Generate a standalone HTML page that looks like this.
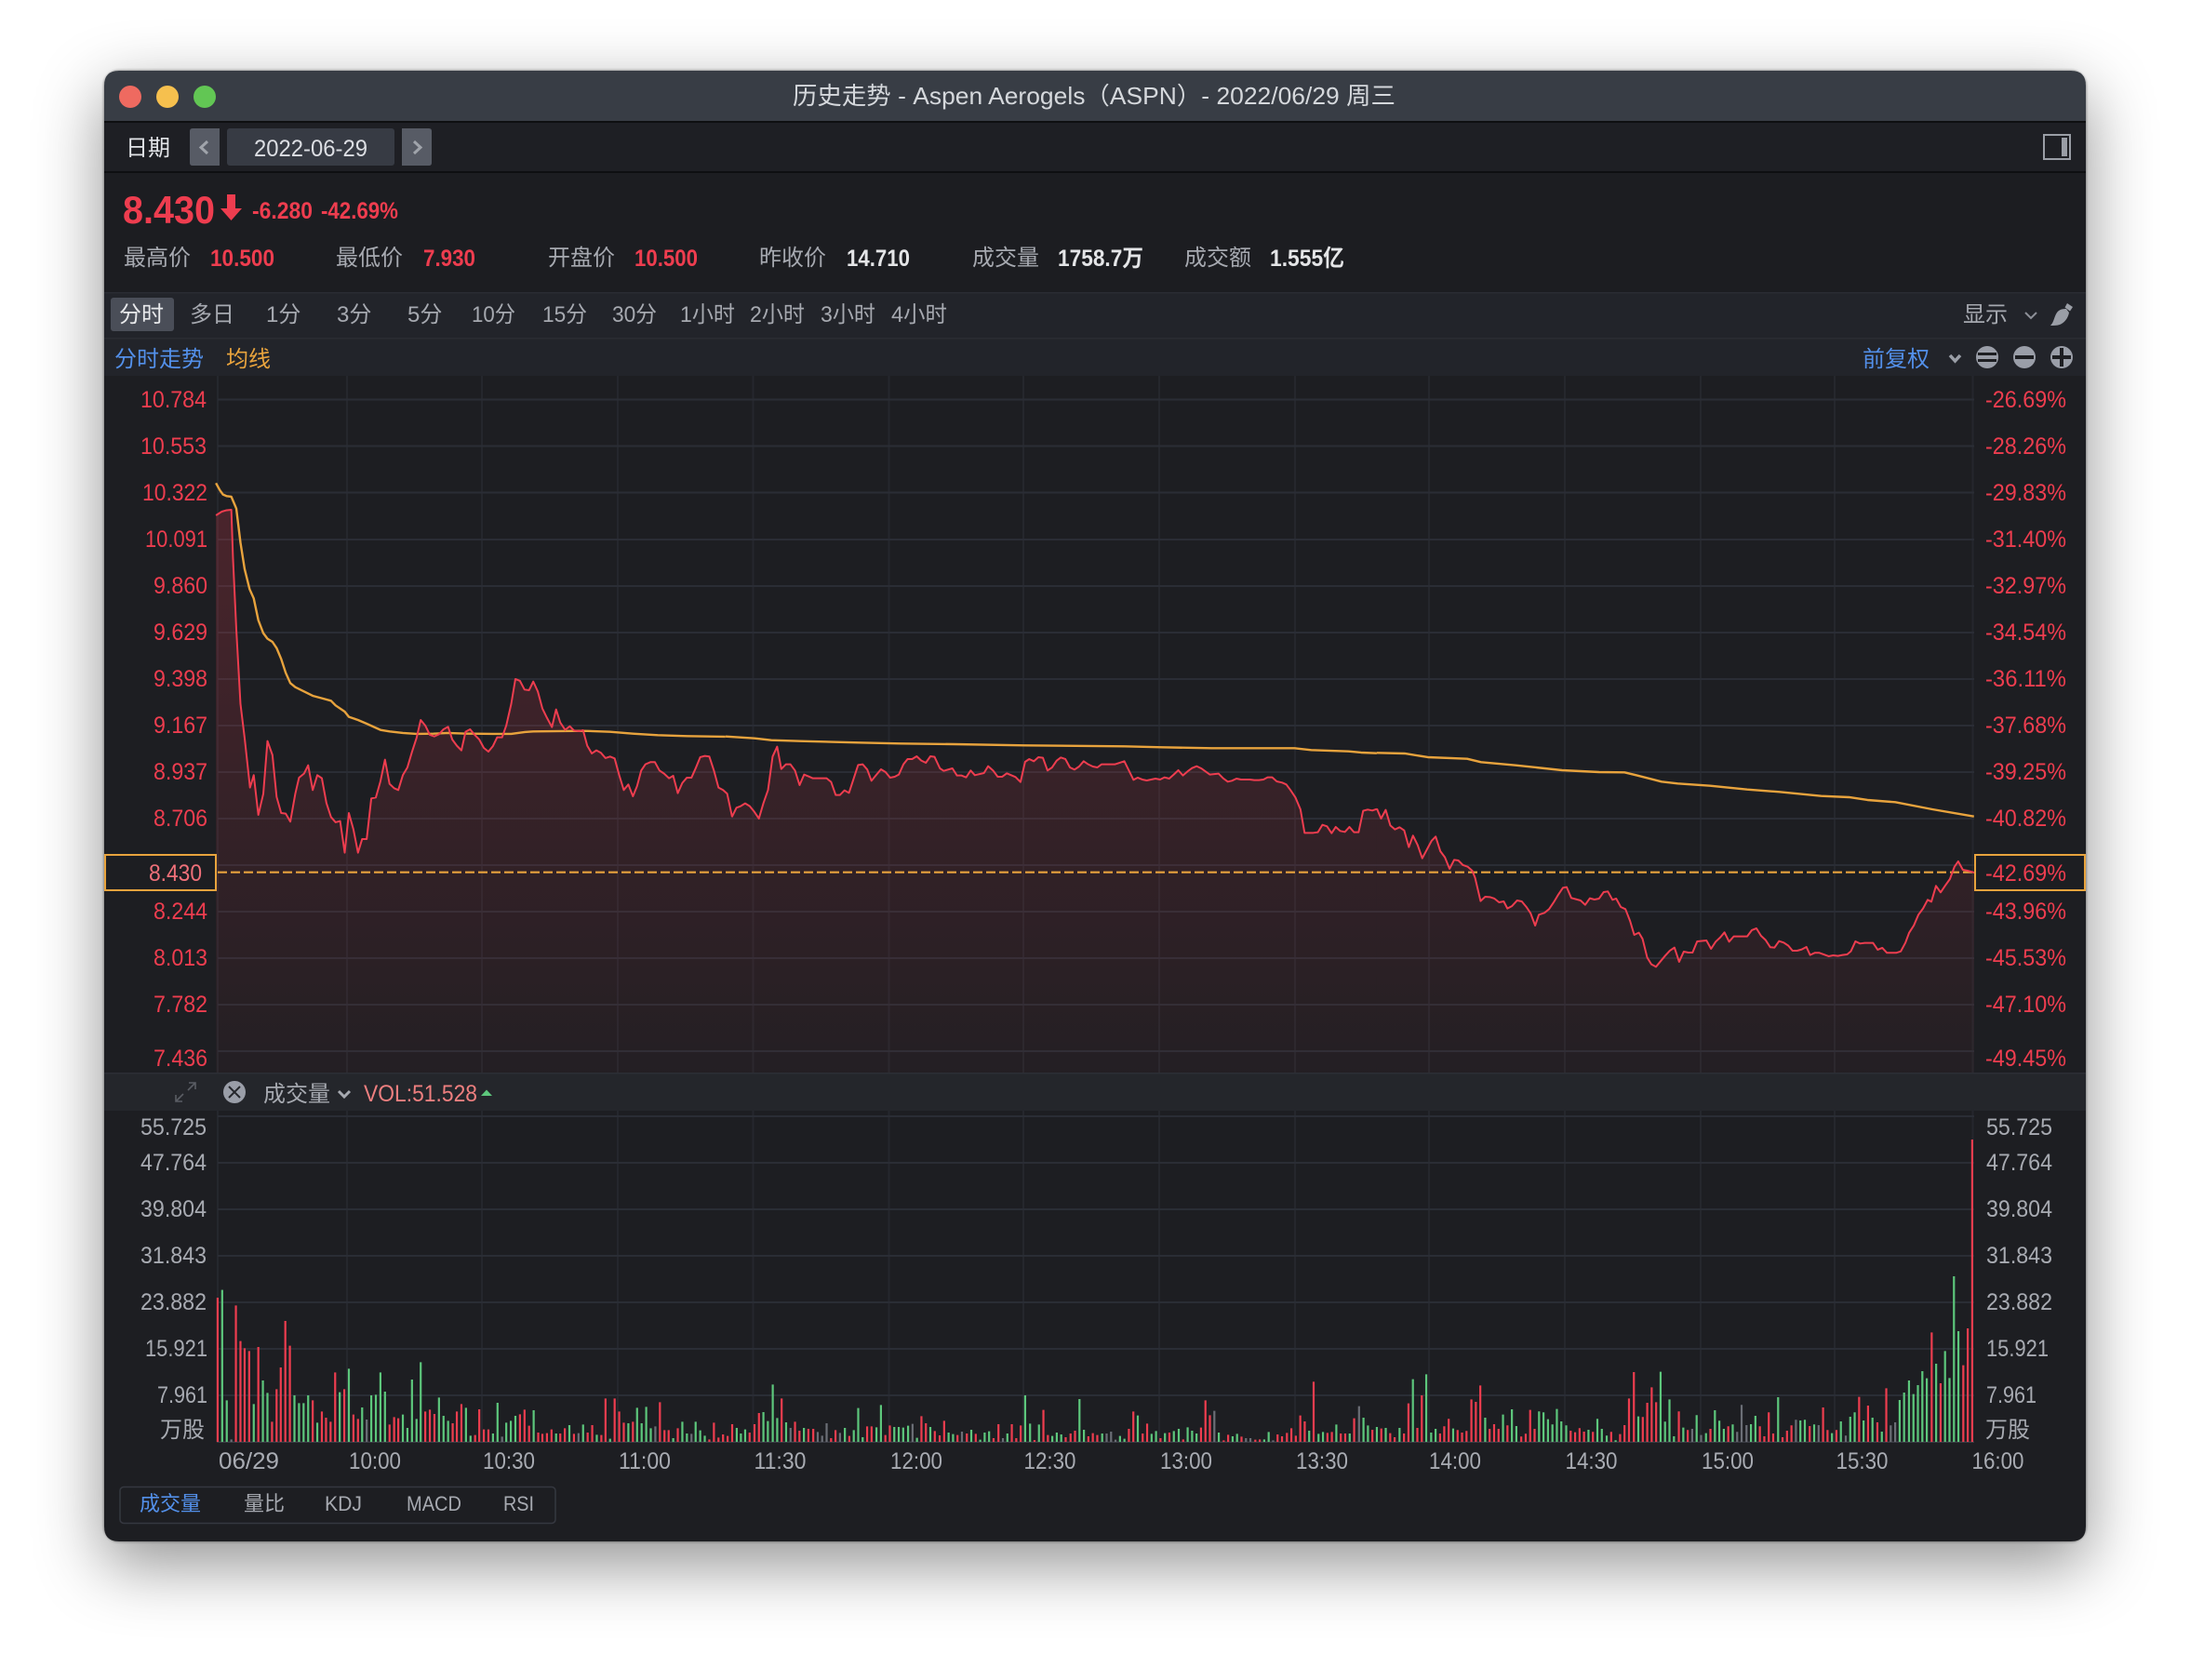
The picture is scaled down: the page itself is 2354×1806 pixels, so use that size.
<!DOCTYPE html>
<html lang="zh"><head><meta charset="utf-8"><title>历史走势</title>
<style>
html,body{margin:0;padding:0;width:2354px;height:1806px;overflow:hidden;background:#fff}
#win{position:absolute;left:112px;top:76px;width:2130px;height:1581px;border-radius:16px;box-shadow:0 24px 70px 2px rgba(0,0,0,.42),0 0 2px 1px rgba(0,0,0,.3)}
svg{position:absolute;left:0;top:0}
text{font-family:"Liberation Sans","Noto Sans CJK SC",sans-serif;font-size:25px;white-space:pre}
.c{font-size:24px;fill:#a6a9b0}
.r{fill:#ee3d4f}
.g{fill:#a8abb2}
.b{font-weight:700}
.bl{fill:#5390ea}
.nse{vector-effect:non-scaling-stroke;fill:none}
.ln{stroke:#2a2d35;stroke-width:2}
.vl{stroke:#25272d;stroke-width:2}
</style></head><body>
<div id="win"></div>
<svg width="2354" height="1806" viewBox="0 0 2354 1806" xmlns="http://www.w3.org/2000/svg">
<defs>
<linearGradient id="fg" gradientUnits="userSpaceOnUse" x1="0" y1="560" x2="0" y2="1153">
<stop offset="0" stop-color="#f03c50" stop-opacity=".21"/><stop offset="1" stop-color="#f03c50" stop-opacity=".03"/></linearGradient>
<clipPath id="ar">
<polygon transform="translate(100,500) scale(.4464,.3333)" points="296,162 310,150 320,146 333,144 337,300 345,530 355,770 365,880 378,1040 387,1000 398,1128 410,1060 420,890 432,935 442,1070 453,1122 464,1124 475,1150 487,1060 496,1008 508,995 518,968 529,1048 540,1000 551,1010 562,1090 573,1135 584,1152 595,1148 606,1250 616,1122 627,1175 638,1250 648,1206 659,1206 670,1075 681,1072 692,1020 703,950 714,1028 725,1042 735,1048 746,1000 757,975 768,925 779,880 789,822 800,840 811,870 822,875 833,868 844,852 855,844 865,885 876,905 887,920 897,860 908,852 919,870 930,885 941,912 952,924 963,906 973,878 985,878 995,840 1007,770 1017,690 1028,696 1039,724 1050,726 1060,698 1071,730 1082,785 1093,815 1105,845 1115,788 1125,830 1137,854 1148,842 1158,856 1170,858 1180,855 1190,905 1201,930 1212,920 1223,928 1234,945 1245,940 1256,946 1267,1000 1278,1048 1289,1030 1300,1068 1310,1035 1320,985 1330,965 1342,958 1353,958 1364,985 1375,995 1387,1010 1397,1002 1408,1058 1419,1025 1430,1008 1441,1008 1451,978 1462,942 1473,938 1484,940 1495,985 1506,1040 1517,1048 1527,1060 1539,1135 1539,1959 296,1959"/>
<polygon transform="translate(780,720) scale(.4464,.3333)" points="15,475 26,445 36,440 47,431 58,440 69,458 80,480 91,430 102,388 113,280 124,248 134,320 145,305 156,305 167,325 178,372 189,338 200,344 210,350 243,350 254,362 265,404 275,404 286,389 297,397 308,352 319,307 330,305 341,322 351,358 362,340 374,321 385,330 396,348 407,345 417,338 428,305 438,288 449,288 460,279 471,293 482,300 493,279 503,281 516,318 525,326 546,318 557,341 568,341 579,347 590,325 600,340 622,333 632,311 644,325 655,345 666,345 677,334 698,346 710,362 721,297 731,288 742,295 753,282 764,284 775,325 786,315 797,293 807,283 818,288 829,315 840,322 851,312 862,295 873,305 884,312 895,315 905,305 937,305 960,295 982,355 992,348 1003,354 1014,357 1035,351 1046,354 1057,347 1068,351 1079,338 1090,324 1101,341 1112,328 1123,317 1134,311 1145,318 1166,338 1187,335 1198,350 1209,361 1219,358 1230,351 1241,354 1262,354 1273,356 1284,356 1295,354 1305,347 1316,347 1327,360 1340,364 1350,370 1360,388 1372,412 1384,450 1394,526 1415,526 1426,524 1437,500 1448,505 1459,527 1469,507 1480,520 1491,523 1502,507 1513,524 1524,524 1535,455 1546,451 1557,454 1568,449 1568,1299 15,1299"/>
<polygon transform="translate(1480,780) scale(.4975,.3333)" points="0,268 9,300 19,272 29,322 39,335 49,328 59,338 69,392 78,355 88,385 98,428 108,400 118,372 127,358 137,405 147,425 157,462 167,433 176,435 186,450 196,455 206,468 212,490 224,566 234,552 244,553 254,558 264,570 274,567 282,590 292,582 303,564 313,567 323,585 332,605 342,645 350,610 362,604 372,592 382,570 392,545 402,523 410,521 420,556 430,560 440,564 450,578 460,557 470,561 480,558 490,537 499,535 509,562 517,558 527,585 537,592 547,630 556,675 566,668 574,688 584,748 593,770 603,778 613,760 623,742 633,726 643,716 653,762 663,729 673,732 682,732 692,696 712,693 722,720 732,697 742,683 751,667 761,697 771,680 800,680 810,660 820,654 830,678 840,692 850,715 859,716 869,695 879,700 889,710 898,726 908,726 918,722 928,714 936,740 946,733 956,733 976,744 986,741 996,743 1006,740 1016,738 1024,728 1034,696 1044,703 1054,701 1072,701 1082,723 1092,717 1102,733 1122,733 1132,728 1142,700 1150,668 1160,645 1170,610 1180,590 1190,562 1198,568 1208,517 1218,538 1228,516 1238,495 1248,455 1256,438 1266,465 1276,468 1286,472 1292,475 1292,1119 0,1119"/>
</clipPath>
</defs>

<!-- window -->
<path d="M112 130V92Q112 76 128 76H2226Q2242 76 2242 92V130Z" fill="#383d45"/>
<path d="M112 130H2242V1641Q2242 1657 2226 1657H128Q112 1657 112 1641Z" fill="#1d1e22"/>
<rect x="112" y="130" width="2130" height="2" fill="#0e0f11"/>
<rect x="112" y="132" width="2130" height="52" fill="#1e1f24"/>
<rect x="112" y="184" width="2130" height="2" fill="#0e0f11"/>
<rect x="112" y="186" width="2130" height="128" fill="#1c1d21"/>
<rect x="112" y="314" width="2130" height="90" fill="#22242a"/>
<rect x="112" y="314" width="2130" height="1.5" fill="#2a2c33"/>
<rect x="112" y="363" width="2130" height="1.5" fill="#2a2c33"/>

<circle cx="140" cy="104" r="12" fill="#ee6a60"/><circle cx="180" cy="104" r="12" fill="#f6c04e"/><circle cx="220" cy="104" r="12" fill="#62c654"/>
<text x="852" y="112" textLength="648" lengthAdjust="spacingAndGlyphs" fill="#d5d8dc" style="font-size:26px">历史走势 - Aspen Aerogels（ASPN）- 2022/06/29 周三</text>

<!-- toolbar -->
<text x="135" y="167" class="c" style="fill:#e2e4e8">日期</text>
<path d="M207 138H236V178H207Q204 178 204 175V141Q204 138 207 138Z" fill="#575b65"/>
<path d="M223 152l-7 6.500 7 6.500" fill="none" stroke="#a0a4ab" stroke-width="3"/>
<rect x="244" y="138" width="180" height="40" rx="3" fill="#373b44"/>
<text x="273" y="168" textLength="122" lengthAdjust="spacingAndGlyphs" fill="#dcdee3" style="font-size:25px">2022-06-29</text>
<path d="M432 138H461Q464 138 464 141V175Q464 178 461 178H432Z" fill="#575b65"/>
<path d="M445 152l7 6.500-7 6.500" fill="none" stroke="#a0a4ab" stroke-width="3"/>
<rect x="2197" y="145" width="28" height="26" fill="none" stroke="#9a9ea6" stroke-width="2"/>
<rect x="2216" y="148" width="6" height="20" fill="#9a9ea6"/>

<!-- stats -->
<text x="132" y="240" class="r b" textLength="99" lengthAdjust="spacingAndGlyphs" style="font-size:42px">8.430</text>
<path d="M244 209h9v15h7l-11.500 13-11.500-13h7z" fill="#ee3d4f"/>
<text x="271" y="235" class="r b" textLength="65" lengthAdjust="spacingAndGlyphs">-6.280</text>
<text x="345" y="235" class="r b" textLength="83" lengthAdjust="spacingAndGlyphs">-42.69%</text>
<text x="133" y="285" class="c">最高价</text><text x="226" y="286" class="r b" textLength="69" lengthAdjust="spacingAndGlyphs">10.500</text>
<text x="361" y="285" class="c">最低价</text><text x="455" y="286" class="r b" textLength="56" lengthAdjust="spacingAndGlyphs">7.930</text>
<text x="589" y="285" class="c">开盘价</text><text x="682" y="286" class="r b" textLength="68" lengthAdjust="spacingAndGlyphs">10.500</text>
<text x="816" y="285" class="c">昨收价</text><text x="910" y="286" class="b" fill="#e4e5e7" textLength="68" lengthAdjust="spacingAndGlyphs">14.710</text>
<text x="1045" y="285" class="c">成交量</text><text x="1137" y="286" class="b" fill="#e4e5e7" textLength="92" lengthAdjust="spacingAndGlyphs">1758.7万</text>
<text x="1273" y="285" class="c">成交额</text><text x="1365" y="286" class="b" fill="#e4e5e7" textLength="80" lengthAdjust="spacingAndGlyphs">1.555亿</text>

<!-- periods -->
<rect x="119" y="320" width="68" height="36" rx="3" fill="#4a4e58"/>
<text x="128" y="346" class="c" style="fill:#e8e9eb">分时</text>
<text x="204" y="346" class="c">多日</text>
<text x="286" y="346" class="c">1分</text>
<text x="362" y="346" class="c">3分</text>
<text x="438" y="346" class="c">5分</text>
<text x="507" y="346" class="c" textLength="47" lengthAdjust="spacingAndGlyphs">10分</text>
<text x="583" y="346" class="c" textLength="48" lengthAdjust="spacingAndGlyphs">15分</text>
<text x="658" y="346" class="c" textLength="48" lengthAdjust="spacingAndGlyphs">30分</text>
<text x="731" y="346" class="c" textLength="59" lengthAdjust="spacingAndGlyphs">1小时</text>
<text x="806" y="346" class="c" textLength="59" lengthAdjust="spacingAndGlyphs">2小时</text>
<text x="882" y="346" class="c" textLength="59" lengthAdjust="spacingAndGlyphs">3小时</text>
<text x="958" y="346" class="c" textLength="60" lengthAdjust="spacingAndGlyphs">4小时</text>
<text x="2110" y="346" class="c">显示</text>
<path d="M2177 336l6 6 6-6" fill="none" stroke="#8d9098" stroke-width="2"/>
<path d="M2204 350C2208 346 2208 340 2211 336C2214 332 2218 332 2221 332L2224 336C2223 342 2219 347 2214 349C2211 350 2207 350 2204 350Z" fill="#9a9ea6"/>
<path d="M2219.500 330.500L2222 326L2228 330L2225 334.500Z" fill="#9a9ea6"/>

<!-- legend -->
<text x="123" y="394" class="c bl">分时走势</text>
<text x="243" y="394" class="c" style="fill:#e8a33d">均线</text>
<text x="2002" y="394" class="c bl">前复权</text>
<path d="M2096 382l5.500 6 5.500-6" fill="none" stroke="#9a9ea6" stroke-width="3.500"/>
<circle cx="2136" cy="384" r="12" fill="#9a9ea8"/><rect x="2126" y="379" width="20" height="3" fill="#1d1e22"/><rect x="2126" y="386" width="20" height="3" fill="#1d1e22"/>
<circle cx="2176" cy="384" r="12" fill="#9a9ea8"/><rect x="2166" y="382" width="20" height="4" fill="#1d1e22"/>
<circle cx="2216" cy="384" r="12" fill="#9a9ea8"/><rect x="2206" y="382" width="20" height="4" fill="#1d1e22"/><rect x="2214" y="374" width="4" height="20" fill="#1d1e22"/>

<!-- chart area bg -->
<rect x="112" y="404" width="2130" height="749" fill="#1d1e22"/>
<!-- grid -->
<path class="vl" d="M234 404V1153M373 404V1153M518 404V1153M664 404V1153M809.500 404V1153M955.500 404V1153M1100 404V1153M1246 404V1153M1392 404V1153M1536 404V1153M1682 404V1153M1828 404V1153M1972 404V1153M2120.500 404V1153"/>
<path class="ln" d="M234 429.500H2122M234 479.500H2122M234 529.500H2122M234 580H2122M234 630H2122M234 680H2122M234 730H2122M234 780H2122M234 830H2122M234 880H2122M234 930H2122M234 980H2122M234 1030H2122M234 1080H2122M234 1130H2122"/>
<rect x="232" y="500" width="1890" height="653" fill="url(#fg)" clip-path="url(#ar)"/>
<line x1="234" y1="937.700" x2="2122" y2="937.700" stroke="#e8a33d" stroke-width="2.200" stroke-dasharray="10 4"/>

<!-- MA line -->
<g stroke="#e8a33d" stroke-width="2.400" stroke-linejoin="round">
<polyline class="nse" transform="translate(100,500) scale(.4464,.3333)" points="296,58 305,80 313,95 322,100 333,102 345,140 355,250 365,335 377,400 387,430 398,500 410,542 420,560 432,570 442,590 453,625 464,670 475,703 487,716 508,730 529,744 551,752 573,760 584,775 606,795 616,812 638,822 659,834 692,854 714,859 746,864 779,867 820,866 855,864 900,866 963,867 1007,867 1040,861 1060,859 1180,857 1245,860 1300,866 1360,871 1430,874 1523,876"/>
<polyline class="nse" transform="translate(780,720) scale(.4464,.3333)" points="0,215 70,221 110,227 180,230 320,235 420,238 550,240 720,244 960,247 1050,250 1170,253 1370,253 1410,259 1500,263 1530,267 1568,269"/>
<polyline class="nse" transform="translate(1480,780) scale(.4975,.3333)" points="0,88 60,90 110,102 195,107 225,118 300,128 400,144 480,150 535,151 560,160 615,181 650,187 720,194 800,206 870,214 960,227 1020,231 1060,240 1120,247 1200,270 1290,293"/>
</g>
<!-- price line -->
<g stroke="#ee3d4f" stroke-width="2" stroke-linejoin="round">
<polyline class="nse" transform="translate(100,500) scale(.4464,.3333)" points="296,162 310,150 320,146 333,144 337,300 345,530 355,770 365,880 378,1040 387,1000 398,1128 410,1060 420,890 432,935 442,1070 453,1122 464,1124 475,1150 487,1060 496,1008 508,995 518,968 529,1048 540,1000 551,1010 562,1090 573,1135 584,1152 595,1148 606,1250 616,1122 627,1175 638,1250 648,1206 659,1206 670,1075 681,1072 692,1020 703,950 714,1028 725,1042 735,1048 746,1000 757,975 768,925 779,880 789,822 800,840 811,870 822,875 833,868 844,852 855,844 865,885 876,905 887,920 897,860 908,852 919,870 930,885 941,912 952,924 963,906 973,878 985,878 995,840 1007,770 1017,690 1028,696 1039,724 1050,726 1060,698 1071,730 1082,785 1093,815 1105,845 1115,788 1125,830 1137,854 1148,842 1158,856 1170,858 1180,855 1190,905 1201,930 1212,920 1223,928 1234,945 1245,940 1256,946 1267,1000 1278,1048 1289,1030 1300,1068 1310,1035 1320,985 1330,965 1342,958 1353,958 1364,985 1375,995 1387,1010 1397,1002 1408,1058 1419,1025 1430,1008 1441,1008 1451,978 1462,942 1473,938 1484,940 1495,985 1506,1040 1517,1048 1527,1060 1539,1135"/>
<polyline class="nse" transform="translate(780,720) scale(.4464,.3333)" points="15,475 26,445 36,440 47,431 58,440 69,458 80,480 91,430 102,388 113,280 124,248 134,320 145,305 156,305 167,325 178,372 189,338 200,344 210,350 243,350 254,362 265,404 275,404 286,389 297,397 308,352 319,307 330,305 341,322 351,358 362,340 374,321 385,330 396,348 407,345 417,338 428,305 438,288 449,288 460,279 471,293 482,300 493,279 503,281 516,318 525,326 546,318 557,341 568,341 579,347 590,325 600,340 622,333 632,311 644,325 655,345 666,345 677,334 698,346 710,362 721,297 731,288 742,295 753,282 764,284 775,325 786,315 797,293 807,283 818,288 829,315 840,322 851,312 862,295 873,305 884,312 895,315 905,305 937,305 960,295 982,355 992,348 1003,354 1014,357 1035,351 1046,354 1057,347 1068,351 1079,338 1090,324 1101,341 1112,328 1123,317 1134,311 1145,318 1166,338 1187,335 1198,350 1209,361 1219,358 1230,351 1241,354 1262,354 1273,356 1284,356 1295,354 1305,347 1316,347 1327,360 1340,364 1350,370 1360,388 1372,412 1384,450 1394,526 1415,526 1426,524 1437,500 1448,505 1459,527 1469,507 1480,520 1491,523 1502,507 1513,524 1524,524 1535,455 1546,451 1557,454 1568,449"/>
<polyline class="nse" transform="translate(1480,780) scale(.4975,.3333)" points="0,268 9,300 19,272 29,322 39,335 49,328 59,338 69,392 78,355 88,385 98,428 108,400 118,372 127,358 137,405 147,425 157,462 167,433 176,435 186,450 196,455 206,468 212,490 224,566 234,552 244,553 254,558 264,570 274,567 282,590 292,582 303,564 313,567 323,585 332,605 342,645 350,610 362,604 372,592 382,570 392,545 402,523 410,521 420,556 430,560 440,564 450,578 460,557 470,561 480,558 490,537 499,535 509,562 517,558 527,585 537,592 547,630 556,675 566,668 574,688 584,748 593,770 603,778 613,760 623,742 633,726 643,716 653,762 663,729 673,732 682,732 692,696 712,693 722,720 732,697 742,683 751,667 761,697 771,680 800,680 810,660 820,654 830,678 840,692 850,715 859,716 869,695 879,700 889,710 898,726 908,726 918,722 928,714 936,740 946,733 956,733 976,744 986,741 996,743 1006,740 1016,738 1024,728 1034,696 1044,703 1054,701 1072,701 1082,723 1092,717 1102,733 1122,733 1132,728 1142,700 1150,668 1160,645 1170,610 1180,590 1190,562 1198,568 1208,517 1218,538 1228,516 1238,495 1248,455 1256,438 1266,465 1276,468 1286,472 1292,475"/>
</g>

<!-- price labels -->
<g class="r">
<text x="151" y="438" textLength="71" lengthAdjust="spacingAndGlyphs">10.784</text>
<text x="151" y="488" textLength="71" lengthAdjust="spacingAndGlyphs">10.553</text>
<text x="153" y="538" textLength="70" lengthAdjust="spacingAndGlyphs">10.322</text>
<text x="156" y="588" textLength="67" lengthAdjust="spacingAndGlyphs">10.091</text>
<text x="165" y="638" textLength="58" lengthAdjust="spacingAndGlyphs">9.860</text>
<text x="165" y="688" textLength="58" lengthAdjust="spacingAndGlyphs">9.629</text>
<text x="165" y="738" textLength="58" lengthAdjust="spacingAndGlyphs">9.398</text>
<text x="165" y="788" textLength="58" lengthAdjust="spacingAndGlyphs">9.167</text>
<text x="165" y="838" textLength="58" lengthAdjust="spacingAndGlyphs">8.937</text>
<text x="165" y="888" textLength="58" lengthAdjust="spacingAndGlyphs">8.706</text>
<text x="165" y="988" textLength="58" lengthAdjust="spacingAndGlyphs">8.244</text>
<text x="165" y="1038" textLength="58" lengthAdjust="spacingAndGlyphs">8.013</text>
<text x="165" y="1088" textLength="58" lengthAdjust="spacingAndGlyphs">7.782</text>
<text x="165" y="1146" textLength="58" lengthAdjust="spacingAndGlyphs">7.436</text>
<text x="2134" y="438" textLength="87" lengthAdjust="spacingAndGlyphs">-26.69%</text>
<text x="2134" y="488" textLength="87" lengthAdjust="spacingAndGlyphs">-28.26%</text>
<text x="2134" y="538" textLength="87" lengthAdjust="spacingAndGlyphs">-29.83%</text>
<text x="2134" y="588" textLength="87" lengthAdjust="spacingAndGlyphs">-31.40%</text>
<text x="2134" y="638" textLength="87" lengthAdjust="spacingAndGlyphs">-32.97%</text>
<text x="2134" y="688" textLength="87" lengthAdjust="spacingAndGlyphs">-34.54%</text>
<text x="2134" y="738" textLength="87" lengthAdjust="spacingAndGlyphs">-36.11%</text>
<text x="2134" y="788" textLength="87" lengthAdjust="spacingAndGlyphs">-37.68%</text>
<text x="2134" y="838" textLength="87" lengthAdjust="spacingAndGlyphs">-39.25%</text>
<text x="2134" y="888" textLength="87" lengthAdjust="spacingAndGlyphs">-40.82%</text>
<text x="2134" y="947" textLength="87" lengthAdjust="spacingAndGlyphs">-42.69%</text>
<text x="2134" y="988" textLength="87" lengthAdjust="spacingAndGlyphs">-43.96%</text>
<text x="2134" y="1038" textLength="87" lengthAdjust="spacingAndGlyphs">-45.53%</text>
<text x="2134" y="1088" textLength="87" lengthAdjust="spacingAndGlyphs">-47.10%</text>
<text x="2134" y="1146" textLength="87" lengthAdjust="spacingAndGlyphs">-49.45%</text>
</g>
<rect x="113" y="919" width="119" height="38" fill="none" stroke="#e8a33d" stroke-width="2"/>
<rect x="2123" y="919" width="118" height="38" fill="none" stroke="#e8a33d" stroke-width="2"/>
<text x="160" y="947" textLength="57" lengthAdjust="spacingAndGlyphs" fill="#ef7079">8.430</text>

<!-- volume header -->
<rect x="112" y="1153" width="2130" height="41" fill="#24262b"/>
<rect x="112" y="1153" width="2130" height="1.500" fill="#2c2e35"/>
<path d="M189 1184l8-8M202 1172l8-8M203 1164h7v7M189 1177v7h7" fill="none" stroke="#5a5d64" stroke-width="1.600"/>
<circle cx="252" cy="1174" r="12" fill="#9a9ea8"/>
<path d="M246 1168l12 12M258 1168l-12 12" stroke="#24262b" stroke-width="2"/>
<text x="283" y="1184" class="c">成交量</text>
<path d="M364 1173l6 6 6-6" fill="none" stroke="#a6a9b0" stroke-width="3"/>
<text x="391" y="1184" textLength="122" lengthAdjust="spacingAndGlyphs" fill="#ee7f7f">VOL:51.528</text>
<path d="M517 1178h12l-6-6.500z" fill="#5dc77c"/>

<!-- volume grid -->
<path class="vl" d="M234 1194V1550M373 1194V1550M518 1194V1550M664 1194V1550M809.500 1194V1550M955.500 1194V1550M1100 1194V1550M1246 1194V1550M1392 1194V1550M1536 1194V1550M1682 1194V1550M1828 1194V1550M1972 1194V1550M2120.500 1194V1550"/>
<path class="ln" d="M234 1200H2122M234 1250H2122M234 1300H2122M234 1350H2122M234 1400H2122M234 1450H2122M234 1500H2122"/>
<rect x="233" y="1549.500" width="1889" height="1.500" fill="#3a3c44"/>

<!-- volume bars -->
<g stroke-width="2.200">
<g transform="translate(100,1400) scale(.4464,.3333)">
<path class="nse" stroke="#ee3d4f" d="M300-15V450M344 10V450M355 125V450M365 148V450M376 157V450M398 144V450M431 385V450M442 280V450M452 210V450M463 60V450M474 140V450M529 316V450M551 352V450M561 372V450M572 385V450M583 226V450M605 280V450M627 362V450M638 376V450M714 394V450M725 370V450M735 374V450M800 352V450M811 346V450M822 360V450M866 390V450M876 352V450M887 328V450M920 428V450M930 345V450M941 410V450M952 410V450M1028 361V450M1039 346V450M1050 398V450M1072 420V450M1082 424V450M1093 422V450M1104 410V450M1125 423V450M1136 406V450M1158 424V450M1191 420V450M1202 396V450M1224 428V450M1234 310V450M1256 310V450M1267 352V450M1278 388V450M1300 385V450M1365 322V450M1376 412V450M1386 412V450M1408 406V450M1484 442V450M1495 388V450M1506 436V450M1517 426V450M1528 431V450M1539 393V450"/>
<path class="nse" stroke="#5dc77c" d="M311-40V450M322 316V450M387 328V450M409 252V450M420 292V450M485 300V450M496 325V450M507 325V450M518 300V450M540 388V450M594 290V450M616 214V450M648 339V450M670 300V450M681 298V450M692 226V450M703 288V450M746 362V450M757 405V450M768 249V450M779 376V450M789 193V450M833 307V450M844 366V450M855 382V450M898 340V450M909 430V450M963 423V450M974 324V450M995 388V450M1006 382V450M1017 366V450M1061 348V450M1115 423V450M1147 396V450M1180 394V450M1213 427V450M1245 440V450M1289 390V450M1310 340V450M1321 390V450M1332 337V450M1343 406V450M1397 438V450M1419 385V450M1430 423V450M1451 385V450M1462 413V450M1473 430V450M1550 405V450M1560 423V450"/>
<path class="nse" stroke="#6b6e76" d="M333 442V450M659 378V450M985 433V450M1169 422V450M1354 400V450M1441 424V450"/>
</g>
<g transform="translate(800,1400) scale(.4785,.3333)">
<path class="nse" stroke="#ee3d4f" d="M12 420V450M23 393V450M33 357V450M84 310V450M114 385V450M124 414V450M144 408V450M155 408V450M195 438V450M205 412V450M236 431V450M276 400V450M286 400V450M317 428V450M327 397V450M398 367V450M408 390V450M428 415V450M439 429V450M449 382V450M479 428V450M500 423V450M520 424V450M560 438V450M571 393V450M601 393V450M611 438V450M621 397V450M652 444V450M672 347V450M682 428V450M722 435V450M733 423V450M743 414V450M773 432V450M783 422V450M793 428V450M864 408V450M874 352V450M895 423V450M905 391V450M935 438V450M955 420V450M986 442V450M1026 404V450M1036 316V450M1046 364V450M1077 445V450M1087 427V450M1117 433V450M1148 443V450M1158 442V450M1198 426V450M1208 432V450M1219 421V450M1229 406V450M1239 430V450M1249 365V450M1259 384V450M1279 256V450M1310 421V450M1320 418V450M1340 423V450M1350 423V450M1370 374V450M1411 411V450M1431 407V450M1451 422V450M1461 435V450M1482 423V450M1492 326V450M1512 405V450M1522 300V450M1563 423V450"/>
<path class="nse" stroke="#5dc77c" d="M2 410V450M43 354V450M53 383V450M64 265V450M74 373V450M94 387V450M134 405V450M226 405V450M246 412V450M256 341V450M266 435V450M297 403V450M307 331V450M337 402V450M347 402V450M357 404V450M368 398V450M388 437V450M418 402V450M459 420V450M469 425V450M510 411V450M530 443V450M540 420V450M550 416V450M591 423V450M631 300V450M642 391V450M662 394V450M692 431V450M702 420V450M712 426V450M753 312V450M763 411V450M804 423V450M844 431V450M854 440V450M884 365V450M915 424V450M925 415V450M945 422V450M965 415V450M976 408V450M996 403V450M1006 414V450M1016 423V450M1066 420V450M1097 432V450M1107 424V450M1168 442V450M1178 418V450M1269 414V450M1290 424V450M1300 418V450M1330 394V450M1360 423V450M1391 372V450M1401 397V450M1421 402V450M1441 405V450M1472 405V450M1502 248V450M1532 232V450M1543 420V450M1553 408V450"/>
<path class="nse" stroke="#6b6e76" d="M104 405V450M165 418V450M175 430V450M185 390V450M215 421V450M378 392V450M489 417V450M581 438V450M814 423V450M824 417V450M834 443V450M1056 350V450M1127 438V450M1137 438V450M1188 445V450M1381 335V450"/>
</g>
<g transform="translate(1550,1300) scale(.4785,.3333)">
<path class="nse" stroke="#ee3d4f" d="M5 700V750M15 676V750M35 712V750M45 720V750M55 715V750M66 613V750M76 621V750M86 568V750M107 708V750M117 693V750M127 708V750M147 697V750M178 733V750M188 724V750M198 647V750M208 708V750M289 714V750M299 719V750M309 706V750M319 717V750M339 718V750M380 718V750M400 725V750M410 696V750M420 610V750M431 525V750M451 670V750M461 624V750M471 574V750M481 622V750M532 652V750M552 712V750M603 708V750M643 700V750M714 700V750M724 732V750M734 655V750M744 723V750M765 735V750M775 714V750M785 697V750M826 699V750M856 639V750M866 712V750M886 712V750M937 605V750M957 633V750M978 687V750M998 577V750M1100 397V750M1120 561V750M1171 503V750M1181 384V750M1191-225V750"/>
<path class="nse" stroke="#5dc77c" d="M25 707V750M97 672V750M137 662V750M157 645V750M167 699V750M218 652V750M228 655V750M238 677V750M248 694V750M258 644V750M268 684V750M279 697V750M329 711V750M349 676V750M359 708V750M370 730V750M390 745V750M441 668V750M491 524V750M501 685V750M511 613V750M521 732V750M542 704V750M572 664V750M593 722V750M613 648V750M623 682V750M633 708V750M653 694V750M694 693V750M704 666V750M755 606V750M805 681V750M815 679V750M836 694V750M876 722V750M896 684V750M917 669V750M927 655V750M947 681V750M967 672V750M988 717V750M1028 615V750M1038 591V750M1049 552V750M1059 596V750M1069 567V750M1079 522V750M1089 545V750M1110 498V750M1130 457V750M1140 544V750M1150 216V750M1160 393V750"/>
<path class="nse" stroke="#6b6e76" d="M562 708V750M582 728V750M663 718V750M673 631V750M684 696V750M795 679V750M846 696V750M907 730V750M1008 697V750M1018 687V750"/>
</g>
</g>

<!-- volume labels -->
<g class="g">
<text x="151" y="1220" textLength="71" lengthAdjust="spacingAndGlyphs">55.725</text>
<text x="151" y="1258" textLength="71" lengthAdjust="spacingAndGlyphs">47.764</text>
<text x="151" y="1308" textLength="71" lengthAdjust="spacingAndGlyphs">39.804</text>
<text x="151" y="1358" textLength="71" lengthAdjust="spacingAndGlyphs">31.843</text>
<text x="151" y="1408" textLength="71" lengthAdjust="spacingAndGlyphs">23.882</text>
<text x="156" y="1458" textLength="67" lengthAdjust="spacingAndGlyphs">15.921</text>
<text x="169" y="1508" textLength="54" lengthAdjust="spacingAndGlyphs">7.961</text>
<text x="2135" y="1220" textLength="71" lengthAdjust="spacingAndGlyphs">55.725</text>
<text x="2135" y="1258" textLength="71" lengthAdjust="spacingAndGlyphs">47.764</text>
<text x="2135" y="1308" textLength="71" lengthAdjust="spacingAndGlyphs">39.804</text>
<text x="2135" y="1358" textLength="71" lengthAdjust="spacingAndGlyphs">31.843</text>
<text x="2135" y="1408" textLength="71" lengthAdjust="spacingAndGlyphs">23.882</text>
<text x="2135" y="1458" textLength="67" lengthAdjust="spacingAndGlyphs">15.921</text>
<text x="2135" y="1508" textLength="54" lengthAdjust="spacingAndGlyphs">7.961</text>
<text x="235" y="1579" textLength="65" lengthAdjust="spacingAndGlyphs">06/29</text>
<text x="375" y="1579" textLength="56" lengthAdjust="spacingAndGlyphs">10:00</text>
<text x="519" y="1579" textLength="56" lengthAdjust="spacingAndGlyphs">10:30</text>
<text x="665" y="1579" textLength="56" lengthAdjust="spacingAndGlyphs">11:00</text>
<text x="810.500" y="1579" textLength="56" lengthAdjust="spacingAndGlyphs">11:30</text>
<text x="957" y="1579" textLength="56" lengthAdjust="spacingAndGlyphs">12:00</text>
<text x="1100.500" y="1579" textLength="56" lengthAdjust="spacingAndGlyphs">12:30</text>
<text x="1247" y="1579" textLength="56" lengthAdjust="spacingAndGlyphs">13:00</text>
<text x="1393" y="1579" textLength="56" lengthAdjust="spacingAndGlyphs">13:30</text>
<text x="1536" y="1579" textLength="56" lengthAdjust="spacingAndGlyphs">14:00</text>
<text x="1682.500" y="1579" textLength="56" lengthAdjust="spacingAndGlyphs">14:30</text>
<text x="1829" y="1579" textLength="56" lengthAdjust="spacingAndGlyphs">15:00</text>
<text x="1973.500" y="1579" textLength="56" lengthAdjust="spacingAndGlyphs">15:30</text>
<text x="2119.500" y="1579" textLength="56" lengthAdjust="spacingAndGlyphs">16:00</text>
</g>
<text x="172" y="1545" class="c" style="fill:#a8abb2">万股</text>
<text x="2134" y="1545" class="c" style="fill:#a8abb2">万股</text>

<!-- bottom tabs -->
<rect x="129" y="1598.500" width="468" height="39" rx="4" fill="none" stroke="#353840" stroke-width="1.500"/>
<text x="150" y="1624" class="bl" style="font-size:22px">成交量</text>
<text x="262" y="1624" fill="#a6a9b0" style="font-size:22px">量比</text>
<text x="349" y="1624" fill="#a6a9b0" textLength="40" lengthAdjust="spacingAndGlyphs" style="font-size:22px">KDJ</text>
<text x="437" y="1624" fill="#a6a9b0" textLength="59" lengthAdjust="spacingAndGlyphs" style="font-size:22px">MACD</text>
<text x="541" y="1624" fill="#a6a9b0" textLength="33" lengthAdjust="spacingAndGlyphs" style="font-size:22px">RSI</text>
</svg>
</body></html>
